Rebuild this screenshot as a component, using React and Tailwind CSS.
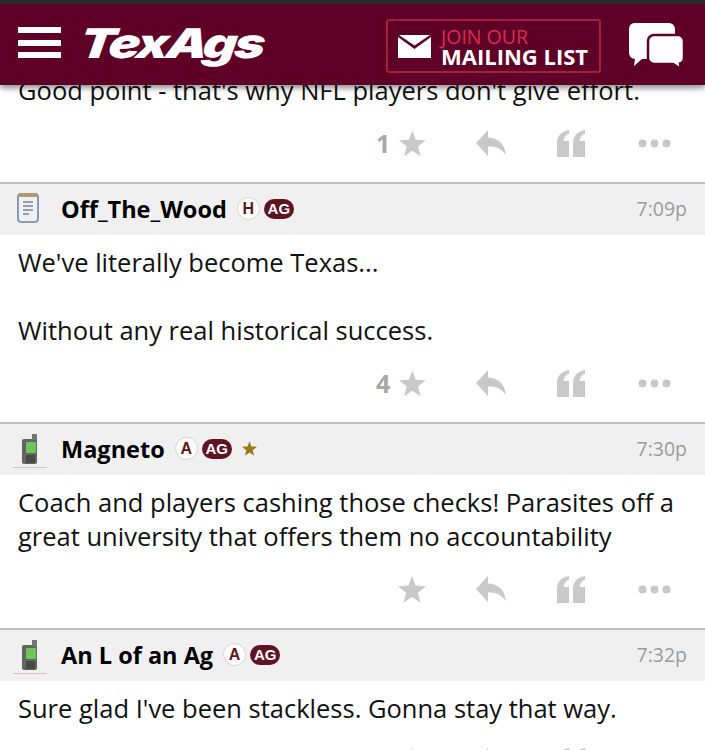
import { Fragment } from "react";

const Star = ({ className = "w-[28px] h-[27px]", fill = "#c9c9c9" }) => (
  <svg viewBox="0 0 28 27" className={className}>
    <path d="M14 0l3.600 9.600L28 10.200l-8.100 6.500 2.700 10.100L14 21.100l-8.600 5.700 2.700-10.100L0 10.200l10.400-.6z" fill={fill} />
  </svg>
);

const Reply = () => (
  <svg viewBox="0 0 30 27" className="w-[30px] h-[27px]">
    <path d="M12 0v7.500c9 .3 15.500 5 17.500 14.500l.2 3c-3.500-6-9-8.500-17.700-8.500V26L0 13z" fill="#c9c9c9" />
  </svg>
);

const Quote = () => (
  <svg viewBox="0 0 28 27" className="w-[28px] h-[27px]">
    <path d="M12 0v3.500C8.500 5 6.800 7.500 6.500 11H12v16H0V13C0 6 4 1.500 12 0zM28 0v3.500c-3.500 1.500-5.200 4-5.500 7.500H28v16H16V13c0-7 4-11.500 12-13z" fill="#c9c9c9" />
  </svg>
);

const Dots = () => (
  <svg viewBox="0 0 33 9" className="w-[33px] h-[9px]">
    <circle cx="4.500" cy="4.500" r="4" fill="#c9c9c9" />
    <circle cx="16.500" cy="4.500" r="4" fill="#c9c9c9" />
    <circle cx="28.500" cy="4.500" r="4" fill="#c9c9c9" />
  </svg>
);

const Notepad = () => (
  <svg viewBox="0 0 24 32" className="w-[24px] h-[32px]">
    <rect x="2" y="2" width="20" height="28" rx="3" fill="#eef0f4" stroke="#8c9bb5" strokeWidth="2" />
    <rect x="3" y="1" width="18" height="4" rx="1" fill="#b09a6e" />
    <path d="M7 10h10M7 14h10M7 18h10M7 22h6" stroke="#7b8696" strokeWidth="1.500" />
  </svg>
);

const Phone = () => (
  <svg viewBox="0 0 34 34" className="w-[34px] h-[34px]">
    <rect x="9" y="5" width="15" height="25" rx="2" fill="#626562" />
    <rect x="19" y="0" width="5" height="6" fill="#737673" />
    <rect x="13" y="8" width="10" height="11" rx="1" fill="#6fc55a" />
    <rect x="13" y="21" width="9" height="8" fill="#484a48" />
    <path d="M0 33.500h34" stroke="#d2c4c4" strokeWidth="1" />
  </svg>
);

const Chat = () => (
  <svg viewBox="0 0 56 46" className="w-[56px] h-[46px]">
    <path d="M6 0h35a6 6 0 0 1 6 6v24a6 6 0 0 1-6 6H14l-8 7 1-7a6 6 0 0 1-6-6V6a6 6 0 0 1 5-6z" fill="#fff" />
    <path d="M26 12h24a6 6 0 0 1 6 6v17a6 6 0 0 1-4 5.500l1 5.500-8-5H26a6 6 0 0 1-6-6V18a6 6 0 0 1 6-6z" fill="#fff" stroke="#5f0026" strokeWidth="2.500" />
  </svg>
);

const Envelope = () => (
  <svg viewBox="0 0 33 23" className="w-[33px] h-[23px] shrink-0">
    <path d="M0 2l16.500 12L33 2v21H0z" fill="#fff" />
    <path d="M1 0h31L16.500 10.500z" fill="#fff" />
  </svg>
);

const Actions = ({ count }) => (
  <div className="flex h-[74px] items-center pr-[34px] pb-[4px] justify-end">
    <div className="flex items-center w-[50px] justify-end">
      {count && <span className="mr-[9px] text-[25px] font-bold text-[#a8a8a8]">{count}</span>}
      <Star />
    </div>
    <div className="ml-[50px] w-[30px] flex"><Reply /></div>
    <div className="ml-[51px] w-[28px] flex"><Quote /></div>
    <div className="ml-[53px] w-[33px] flex"><Dots /></div>
  </div>
);

const PostHead = ({ icon, iconClass, name, rank, star, time }) => (
  <div className="flex h-[49px] items-center bg-[#f0f0f0] pr-[18px] pb-[2px] border-t-2 border-[#bdbdbd] box-content">
    <div className={iconClass}>{icon}</div>
    <span className="mt-[3px] text-[23.500px] leading-none font-bold text-black">{name}</span>
    <span className="ml-[10px] flex h-[23px] w-[23px] items-center justify-center rounded-full border border-[#d5d5d5] bg-white font-['Liberation_Sans',sans-serif] text-[16px] font-bold text-[#5f1423]">
      {rank}
    </span>
    <span className="ml-[4px] flex h-[20px] w-[30px] items-center justify-center rounded-full bg-[#5f1423] font-['Liberation_Sans',sans-serif] text-[15px] font-bold text-white">
      AG
    </span>
    {star && <Star className="ml-[10px] w-[15px] h-[15px]" fill="#9a7a14" />}
    <span className="ml-auto text-[19.500px] text-[#9c9c9c]">{time}</span>
  </div>
);

const phoneClass = "w-[61px] pl-[13px] flex shrink-0 mt-[4px]";

const posts = [
  {
    name: "Off_The_Wood",
    rank: "H",
    icon: <Notepad />,
    iconClass: "w-[61px] pl-[16px] flex shrink-0 -mt-[1px]",
    time: "7:09p",
    count: "4",
    lines: ["We've literally become Texas...", "", "Without any real historical success."],
  },
  {
    name: "Magneto",
    rank: "A",
    star: true,
    icon: <Phone />,
    iconClass: phoneClass,
    time: "7:30p",
    lines: ["Coach and players cashing those checks! Parasites off a", "great university that offers them no accountability"],
  },
  {
    name: "An L of an Ag",
    rank: "A",
    icon: <Phone />,
    iconClass: phoneClass,
    time: "7:32p",
    lines: ["Sure glad I've been stackless. Gonna stay that way."],
  },
];

export default function App() {
  return (
    <div className="h-[750px] overflow-hidden bg-white font-['Open_Sans',sans-serif]">
      <div className="relative z-10 border-t-4 border-[#2b2b2b] shadow-[0_3px_6px_rgba(0,0,0,0.45)]">
        <div className="flex h-[81px] items-center bg-[#5f0026] pl-[18px]">
          <div className="flex h-[31px] w-[43px] flex-col justify-between shrink-0 -mt-[4px]">
            <div className="h-[6px] bg-white" />
            <div className="h-[6px] bg-white" />
            <div className="h-[6px] bg-white" />
          </div>
          <span className="ml-[19px] w-[189px] origin-left scale-x-[1.28] skew-x-[-6deg] font-['Inter',sans-serif] text-[41px] leading-none font-black italic tracking-[-0.05em] text-white -mt-[2px]">
            TexAgs
          </span>
          <div className="ml-[117px] flex h-[54px] w-[215px] items-center rounded-[3px] border-2 border-[#a81e42] pl-[10px] mt-[3px]">
            <Envelope />
            <div className="ml-[10px] flex flex-col">
              <span className="text-[19.500px] leading-[20px] font-medium text-[#dd2c55]">JOIN OUR</span>
              <span className="text-[22px] leading-[18px] font-bold text-white">MAILING LIST</span>
            </div>
          </div>
          <div className="ml-[27px] mt-[2px] flex"><Chat /></div>
        </div>
      </div>

      <div className="-mt-[12px] text-[25.500px] leading-[34px] text-[#111]">
        <p className="h-[35px] pl-[18px]">Good point - that's why NFL players don't give effort.</p>
        <Actions count="1" />
        {posts.map((post) => (
          <Fragment key={post.name}>
            <PostHead {...post} />
            <div className="pl-[18px] pt-[10px] pb-[1px]">
              {post.lines.map((line, i) => (
                <p key={i} className="h-[34px] whitespace-nowrap">{line}</p>
              ))}
            </div>
            <Actions count={post.count} />
          </Fragment>
        ))}
      </div>
    </div>
  );
}
